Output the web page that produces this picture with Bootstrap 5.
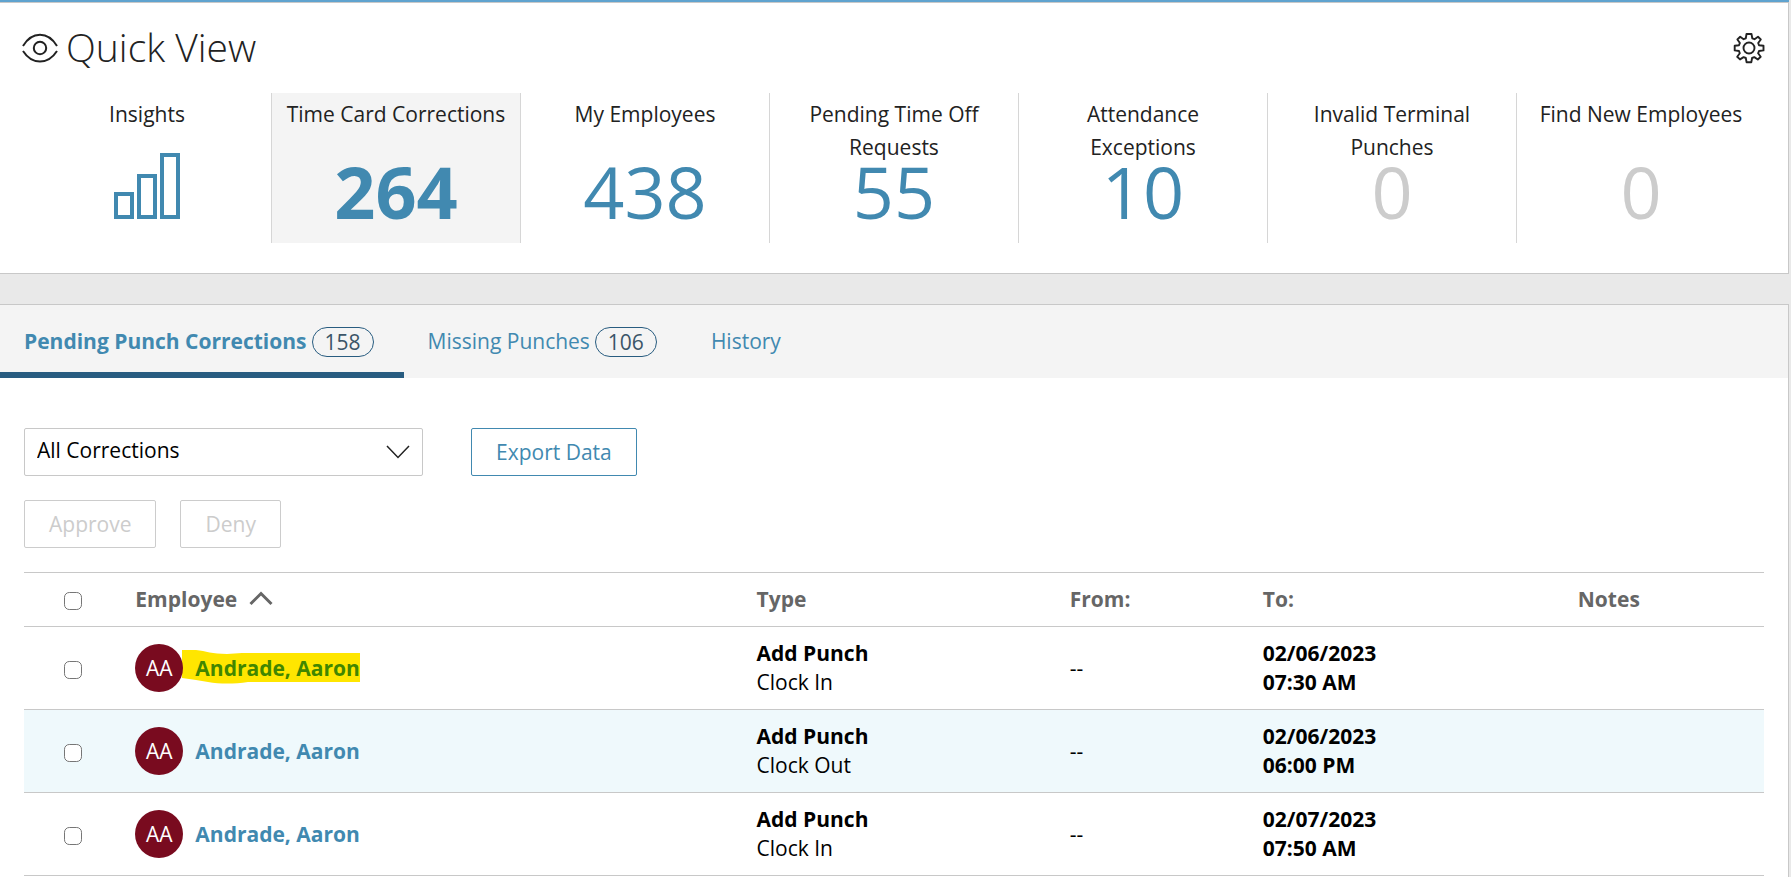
<!DOCTYPE html>
<html lang="en">
<head>
<meta charset="utf-8">
<meta name="viewport" content="width=device-width, initial-scale=1">
<title>Quick View</title>
<link href="https://cdn.jsdelivr.net/npm/bootstrap@5.3.0/dist/css/bootstrap.min.css" rel="stylesheet">
<style>
  :root { --line: #c8c8c8; --accent: #4189b0; --accent-dark: #285c80; --muted: #cccccc; }
  body { font-family: "Open Sans", "Noto Sans", sans-serif; font-size: 21px; line-height: 29px; color: #000; background: #e9e9e9; }
  .shell { margin-right: 2px; border-top: 2px solid #5fa3cf; }
  .panel { background: #fff; border: 1px solid var(--line); border-left: 0; }
  .quick { color: #222; padding: 20px 23px 30px 22px; margin-bottom: 30px; }
  .quick-head { height: 50px; margin-bottom: 20px; }
  .quick-title { font-size: 39px; line-height: 48px; padding-bottom: 2px; font-weight: 300; }
  .tile { flex: 1 1 0; height: 150px; padding: 5px 8px 0; color: #222; text-decoration: none; text-align: center; border-left: 1px solid #d6d6d6; line-height: 33px; }
  .tile:first-child { border-left-color: transparent; }
  .tile.current { background: #f4f4f4; }
  .tile-label { height: 66px; padding: 0 6px; }
  .tile-label.snug { height: 54px; }
  .tile-label.roomy { padding: 0 24px; }
  .tile-count { font-size: 72px; line-height: 54px; color: var(--accent); }
  .tile-count.none { color: var(--muted); }
  .work { min-height: calc(100vh - 304px); border-bottom: 0; }
  .work-body { padding: 50px 24px 0; }
  .tabs { background: #f4f4f4; }
  .tabs a { height: 73px; padding: 0 30px 0 24px; color: var(--accent); text-decoration: none; border-bottom: 6px solid transparent; border-top: 6px solid transparent; }
  .tabs a.active { font-weight: 700; border-bottom-color: var(--accent-dark); }
  .pill { width: 62px; height: 30px; line-height: 28px; border: 1px solid var(--accent-dark); border-radius: 15px; font-weight: 400; color: #3b5568; text-align: center; margin-left: 5px; }
  .pick { width: 399px; height: 48px; font-size: 21px; line-height: 29px; color: #000; border: 1px solid var(--line); border-radius: 2px; padding: 6px 48px 10px 12px;
    background-image: url("data:image/svg+xml,%3Csvg xmlns='http://www.w3.org/2000/svg' viewBox='0 0 24 14'%3E%3Cpath d='M1 1l11 11.500L23 1' fill='none' stroke='%23222' stroke-width='1.500'/%3E%3C/svg%3E"); background-size: 24px 14px; background-position: right 12px center; }
  .act { height: 48px; font-size: 21px; line-height: 29px; padding: 0 24px; border-radius: 2px; --bs-btn-color: var(--accent); --bs-btn-border-color: var(--accent); --bs-btn-disabled-color: var(--muted); --bs-btn-disabled-border-color: var(--muted); --bs-btn-disabled-opacity: 1; }
  .punches { table-layout: fixed; border-top: 1px solid var(--line); }
  .punches > :not(caption) > * > * { padding: 0; border-bottom: 1px solid var(--line); color: #000; background: none; box-shadow: none; vertical-align: middle; }
  .punches > thead > tr > th { height: 54px; color: #666; font-weight: 700; }
  .punches tbody td { height: 83px; }
  .punches tbody tr:nth-child(even) { background: #eff9fc; }
  .w-tick { width: 6.4%; } .w-name { width: 35.7%; } .w-type { width: 18%; } .w-from { width: 11.1%; } .w-to { width: 18.1%; }
  .tick { display: block; width: 18px; height: 18px; margin: 3px 0 0 40px; border: 1px solid #767676; border-radius: 3px; }
  .sort { margin-left: 6px; vertical-align: 1px; }
  .avatar { width: 48px; height: 48px; background: #790b1f; color: #fff; }
  .person { color: var(--accent); font-weight: 700; text-decoration: none; margin-left: 12px; }
  .marked .person { color: #418600; position: relative; }
  .marker { position: absolute; left: 47px; top: 6px; }
</style>
</head>
<body>
<main class="shell">
  <section class="panel quick">
    <div class="quick-head d-flex align-items-center">
      <svg width="36" height="30" viewBox="0 0 36 30" fill="none" stroke="#222" stroke-width="2"><path d="M1 13C10-2 26-2 35 13M1 18C10 32 26 32 35 18"/><circle cx="18" cy="15" r="6.200"/></svg>
      <h1 class="quick-title mb-0 ms-2">Quick View</h1>
      <button class="btn p-0 border-0 ms-auto d-flex" aria-label="Settings">
        <svg width="32" height="32" viewBox="0 0 32 32" fill="none" stroke="#222" stroke-width="1.900" stroke-linejoin="round"><path d="M13.500 2h5l.8 4.300 2.200.9L25 4.800 27.800 7.500 25.200 11l.8 2.200 4.500.6v4.600l-4.500.6-.9 2.300 2.600 3.500-2.900 2.700-3.500-2.400-2.200.9-.8 4.300h-4.700l-.8-4.300-2.200-.9L7 27.400 4.200 24.700l2.600-3.500-.8-2.200-4.300-.6v-4.600l4.300-.6.9-2.200-2.500-3.500L7.200 4.800l3.400 2.400 2.200-.9z"/><circle cx="16" cy="16" r="5.500"/></svg>
      </button>
    </div>
    <nav class="d-flex">
      <a class="tile" href="#"><div class="tile-label snug">Insights</div>
        <svg class="d-block mx-auto" width="68" height="68" viewBox="0 0 68 68" fill="none" stroke="#4189b0" stroke-width="4"><path d="M3 42h16v23H3zM26 24h16v41H26zM49 3h16v62H49z"/></svg></a>
      <a class="tile current" href="#"><div class="tile-label">Time Card Corrections</div><div class="tile-count fw-bold">264</div></a>
      <a class="tile" href="#"><div class="tile-label">My Employees</div><div class="tile-count">438</div></a>
      <a class="tile" href="#"><div class="tile-label roomy">Pending Time Off Requests</div><div class="tile-count">55</div></a>
      <a class="tile" href="#"><div class="tile-label roomy">Attendance Exceptions</div><div class="tile-count">10</div></a>
      <a class="tile" href="#"><div class="tile-label roomy">Invalid Terminal Punches</div><div class="tile-count none">0</div></a>
      <a class="tile" href="#"><div class="tile-label">Find New Employees</div><div class="tile-count none">0</div></a>
    </nav>
  </section>
  <section class="panel work">
    <nav class="tabs d-flex">
      <a class="active d-flex align-items-center" href="#">Pending Punch Corrections<span class="pill">158</span></a>
      <a class="d-flex align-items-center" href="#">Missing Punches<span class="pill">106</span></a>
      <a class="d-flex align-items-center" href="#">History</a>
    </nav>
    <div class="work-body">
      <div class="d-flex gap-5">
        <select class="form-select pick" aria-label="Corrections filter"><option>All Corrections</option></select>
        <button class="btn act">Export Data</button>
      </div>
      <div class="d-flex gap-4 py-4">
        <button class="btn act" disabled>Approve</button>
        <button class="btn act" disabled>Deny</button>
      </div>
      <table class="table punches mb-0">
        <thead><tr>
          <th class="w-tick"><input class="form-check-input tick" type="checkbox" aria-label="Select all"></th>
          <th class="w-name">Employee <svg class="sort" width="24" height="15" viewBox="0 0 24 15" fill="none" stroke="#666" stroke-width="3"><path d="M1.500 13L12 2.500 22.500 13"/></svg></th>
          <th class="w-type">Type</th><th class="w-from">From:</th><th class="w-to">To:</th><th>Notes</th>
        </tr></thead>
        <tbody>
          <tr>
            <td><input class="form-check-input tick" type="checkbox" aria-label="Select row 1"></td>
            <td><div class="marked d-flex align-items-center position-relative">
              <svg class="marker" width="178" height="34" viewBox="0 0 178 34"><path d="M0 0H14C24 1 30 4 45 4L60 3H178V32H66C52 34 38 34 26 32L14 30 0 28z" fill="#ffe600"/></svg>
              <span class="avatar rounded-circle d-flex align-items-center justify-content-center position-relative">AA</span><a class="person" href="#">Andrade, Aaron</a></div></td>
            <td><b>Add Punch</b><br>Clock In</td><td>--</td><td><b>02/06/2023<br>07:30 AM</b></td><td></td>
          </tr>
          <tr>
            <td><input class="form-check-input tick" type="checkbox" aria-label="Select row 2"></td>
            <td><div class="d-flex align-items-center"><span class="avatar rounded-circle d-flex align-items-center justify-content-center">AA</span><a class="person" href="#">Andrade, Aaron</a></div></td>
            <td><b>Add Punch</b><br>Clock Out</td><td>--</td><td><b>02/06/2023<br>06:00 PM</b></td><td></td>
          </tr>
          <tr>
            <td><input class="form-check-input tick" type="checkbox" aria-label="Select row 3"></td>
            <td><div class="d-flex align-items-center"><span class="avatar rounded-circle d-flex align-items-center justify-content-center">AA</span><a class="person" href="#">Andrade, Aaron</a></div></td>
            <td><b>Add Punch</b><br>Clock In</td><td>--</td><td><b>02/07/2023<br>07:50 AM</b></td><td></td>
          </tr>
        </tbody>
      </table>
    </div>
  </section>
</main>
<script src="https://cdn.jsdelivr.net/npm/bootstrap@5.3.0/dist/js/bootstrap.bundle.min.js"></script>
</body>
</html>
